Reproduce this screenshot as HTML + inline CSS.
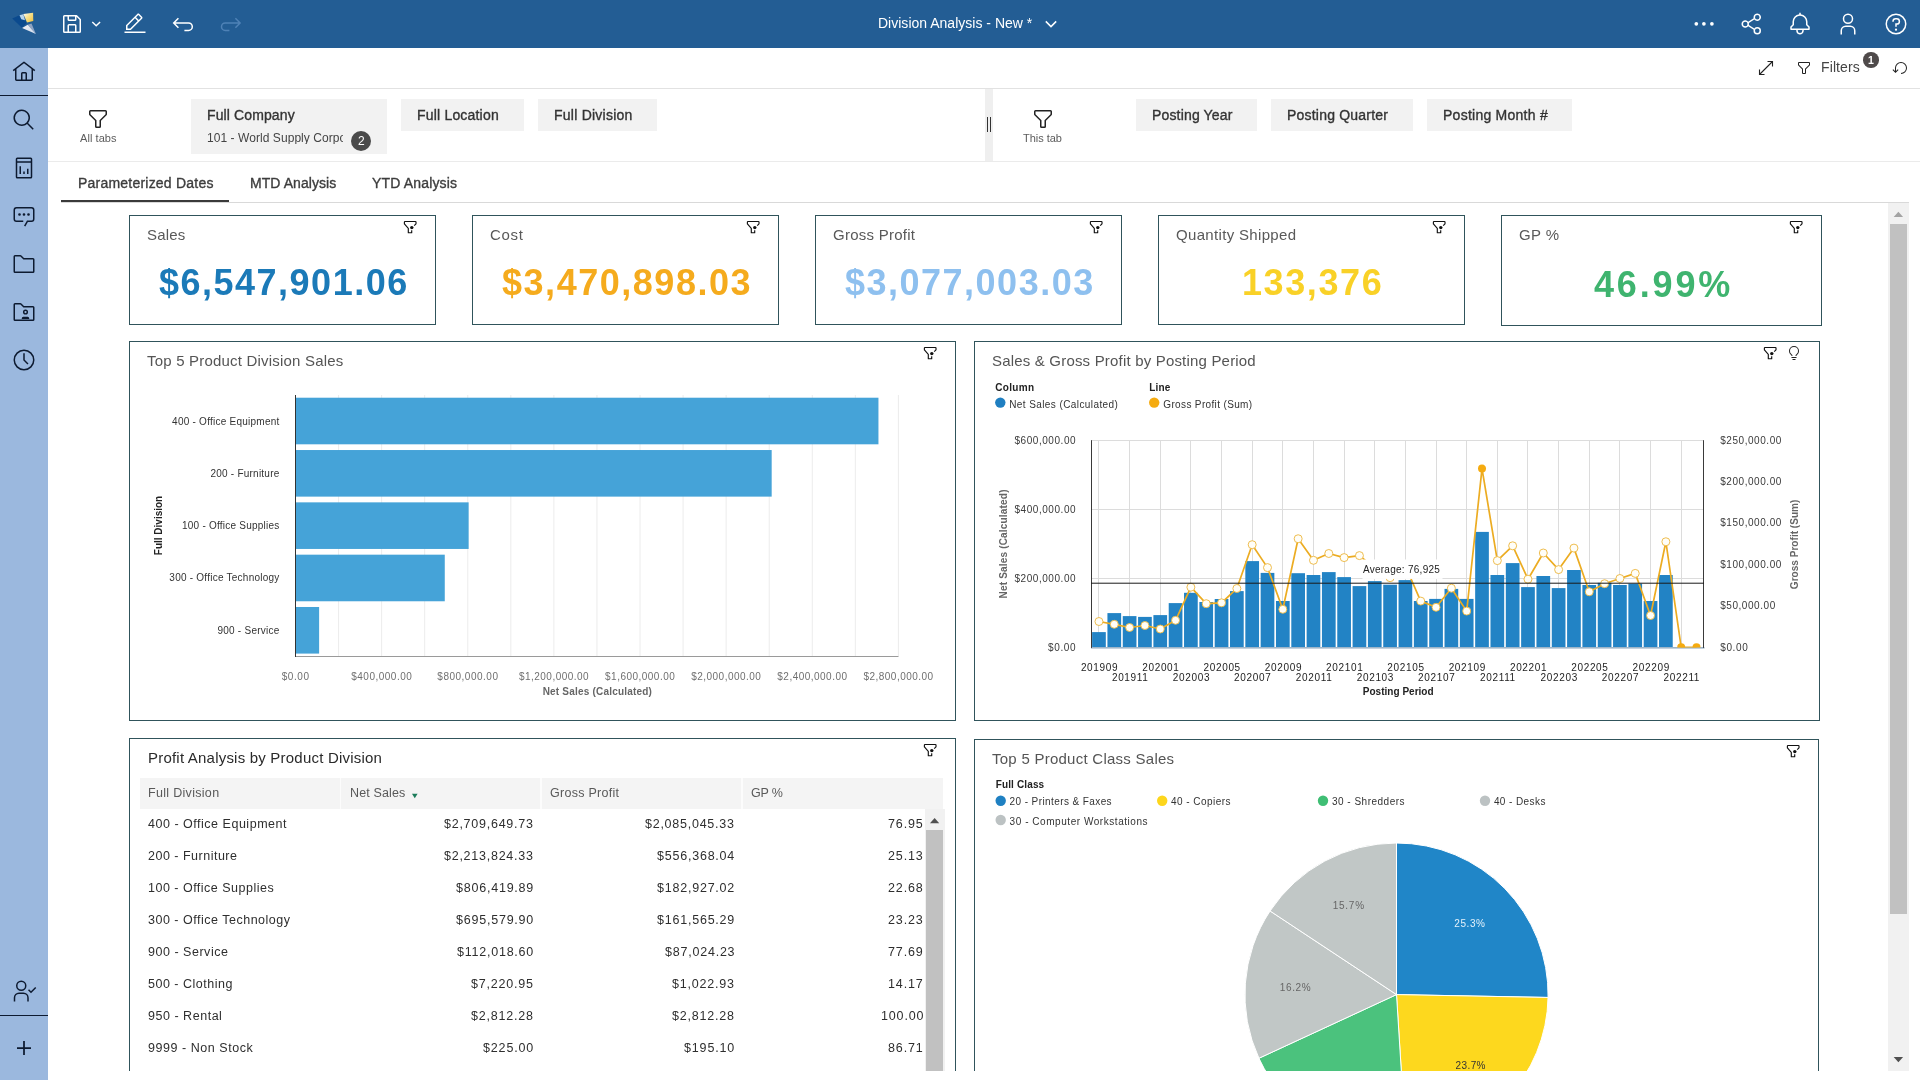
<!DOCTYPE html>
<html lang="en"><head><meta charset="utf-8"><title>Division Analysis - New</title>
<style>
*{box-sizing:border-box}
html,body{margin:0;padding:0;background:#fff}
body{width:1920px;height:1080px;overflow:hidden;position:relative;font-family:"Liberation Sans",sans-serif}
.t{position:absolute;white-space:pre;line-height:1;display:block;will-change:transform}
.ic{position:absolute;display:block;overflow:visible;will-change:transform}
.b{position:absolute;display:block}
.card{position:absolute;border:1px solid #30545b;background:#fff}
svg text{font-family:"Liberation Sans",sans-serif}
</style></head><body>
<!-- top bar -->
<div class="b" style="left:0px;top:0px;width:1920px;height:48px;background:#235d94;"></div><svg class="ic" style="left:8px;top:8px" width="32" height="30" viewBox="8 8 32 30"><defs><linearGradient id="lg1" x1="0" y1="0" x2="1" y2="1"><stop offset="0" stop-color="#ffffff"/><stop offset="0.450" stop-color="#f7e08a"/><stop offset="1" stop-color="#f0bd3a"/></linearGradient><linearGradient id="lg2" x1="0" y1="0" x2="1" y2="1"><stop offset="0" stop-color="#f4f0f4"/><stop offset="1" stop-color="#cfdcec"/></linearGradient></defs><polygon points="12.200,18.400 19.500,15.200 23.500,16 26.500,23.200 22,27.800" fill="#0b4a8e"/><polygon points="19.500,15.200 23.300,14.200 25,20.300 21.300,19.300" fill="#b7d5ef"/><polygon points="23.300,14 33.100,12.700 33.300,21 27,22.600" fill="url(#lg1)"/><polygon points="27.700,24.700 31.500,23.500 35.900,34" fill="#8fa3c2"/><polygon points="22.100,28.100 27.700,24.700 35.900,34" fill="url(#lg2)"/></svg><svg class="ic" style="left:60.00px;top:12.00px" width="24" height="24" viewBox="0 0 32 32" ><path fill="#fff" d="M27.71,9.29l-5-5A1,1,0,0,0,22,4H6A2,2,0,0,0,4,6V26a2,2,0,0,0,2,2H26a2,2,0,0,0,2-2V10A1,1,0,0,0,27.71,9.29ZM12,6h8v4H12Zm8,20H12V18h8Zm2,0V18a2,2,0,0,0-2-2H12a2,2,0,0,0-2,2v8H6V6h4v4a2,2,0,0,0,2,2h8a2,2,0,0,0,2-2V6.41l4,4V26Z"/></svg><svg class="ic" style="left:88px;top:16px" width="16" height="16" viewBox="88 16 16 16" fill="none" stroke="#fff" stroke-width="1.400"><path d="M92.300,21.900L96.200,25.800L100.100,21.900"/></svg><svg class="ic" style="left:123.00px;top:12.00px" width="24" height="24" viewBox="0 0 32 32" ><path fill="#fff" d="M2 26H30V28H2zM25.4 9c.8-.8.8-2 0-2.8l-3.6-3.6c-.8-.8-2-.8-2.8 0l-15 15V24h6.400L25.400 9zM20.400 4L24 7.600l-3 3L17.400 7 20.400 4zM6 22v-3.600l10-10 3.600 3.600-10 10H6z"/></svg><svg class="ic" style="left:0;top:0" width="260" height="48" viewBox="0 0 260 48" fill="none" stroke-width="1.500"><path stroke="#fff" d="M178.400,18.300L173.700,23L178.400,27.700M173.900,23H188.600a3.700,3.700,0,0,1,0,7.400H184.400"/><path stroke="#4f82b6" d="M235.400,18.300L240.100,23L235.400,27.700M239.900,23H225.200a3.700,3.700,0,0,0,0,7.400H229.400"/></svg><span class="t" style="left:877.50px;top:16px;font-size:14px;color:#fff;letter-spacing:0.01px;">Division Analysis - New *</span><svg class="ic" style="left:1040px;top:14px" width="22" height="20" viewBox="1040 14 22 20" fill="none" stroke="#fff" stroke-width="1.500"><path d="M1045.800,21.400L1051,26.600L1056.200,21.400"/></svg><svg class="ic" style="left:1692px;top:12px" width="24" height="24" viewBox="0 0 24 24"><circle cx="4.300" cy="11.800" r="1.850" fill="#fff"/><circle cx="11.900" cy="11.800" r="1.850" fill="#fff"/><circle cx="19.900" cy="11.800" r="1.850" fill="#fff"/></svg><svg class="ic" style="left:1740.00px;top:12.00px" width="24" height="24" viewBox="0 0 32 32" ><path fill="#fff" d="M23,20a5,5,0,0,0-3.89,1.89L11.8,17.32a4.46,4.46,0,0,0,0-2.64l7.31-4.57A5,5,0,1,0,18,7a4.79,4.79,0,0,0,.2,1.32l-7.31,4.57a5,5,0,1,0,0,6.22l7.31,4.57A4.79,4.79,0,0,0,18,25a5,5,0,1,0,5-5ZM23,4a3,3,0,1,1-3,3A3,3,0,0,1,23,4ZM7,19a3,3,0,1,1,3-3A3,3,0,0,1,7,19Zm16,9a3,3,0,1,1,3-3A3,3,0,0,1,23,28Z"/></svg><svg class="ic" style="left:1788.00px;top:11.50px" width="24" height="24" viewBox="0 0 32 32" ><path fill="#fff" d="M28.7071,19.293,26,16.5859V13a10.0136,10.0136,0,0,0-9-9.9492V1H15V3.0508A10.0136,10.0136,0,0,0,6,13v3.5859L3.2929,19.293A1,1,0,0,0,3,20v3a1,1,0,0,0,1,1h7v.7768a5.152,5.152,0,0,0,4.5,5.1987A5.0057,5.0057,0,0,0,21,25V24h7a1,1,0,0,0,1-1V20A1,1,0,0,0,28.7071,19.293ZM19,25a3,3,0,0,1-6,0V24h6Zm8-3H5V20.4141L7.707,17.707A1,1,0,0,0,8,17V13a8,8,0,0,1,16,0v4a1,1,0,0,0,.293.707L27,20.4141Z"/></svg><svg class="ic" style="left:1836.00px;top:11.70px" width="24" height="24" viewBox="0 0 32 32" ><path fill="#fff" d="M16 4a5 5 0 11-5 5 5 5 0 015-5m0-2a7 7 0 107 7A7 7 0 0016 2zM26 30H24V25a5 5 0 00-5-5H13a5 5 0 00-5 5v5H6V25a7 7 0 017-7h6a7 7 0 017 7z"/></svg><svg class="ic" style="left:1884.00px;top:12.00px" width="24" height="24" viewBox="0 0 32 32" ><path fill="#fff" d="M16,2A14,14,0,1,0,30,16,14,14,0,0,0,16,2Zm0,26A12,12,0,1,1,28,16,12,12,0,0,1,16,28ZM17,8H15.5A4.49,4.49,0,0,0,11,12.5V13h2v-.5A2.5,2.5,0,0,1,15.5,10H17a2.5,2.5,0,0,1,0,5H15v4.5h2V17a4.5,4.5,0,0,0,0-9ZM14.5,23.5a1.5,1.5,0,1,0,3,0a1.5,1.5,0,1,0,-3,0Z"/></svg>
<!-- sidebar -->
<div class="b" style="left:0px;top:48px;width:48px;height:1032px;background:#9bb8de;"></div><svg class="ic" style="left:12.00px;top:59.50px" width="24" height="24" viewBox="0 0 32 32" ><path fill="#0d1a30" d="M16.6123,2.2138a1.01,1.01,0,0,0-1.2427,0L1,13.4194l1.2427,1.5717L4,13.6209V26a2.0041,2.0041,0,0,0,2,2H26a2.0037,2.0037,0,0,0,2-2V13.63L29.7573,15,31,13.4282ZM18,26H14V18h4Zm2,0V18a2.0023,2.0023,0,0,0-2-2H14a2.002,2.002,0,0,0-2,2v8H6V12.0615l10-7.79,10,7.8005V26Z"/></svg><div class="b" style="left:0px;top:95px;width:48px;height:1px;background:#0d1a30;"></div><svg class="ic" style="left:12.00px;top:108.00px" width="24" height="24" viewBox="0 0 32 32" ><path fill="#0d1a30" d="M29,27.5859l-7.5521-7.5521a11.0177,11.0177,0,1,0-1.4141,1.4141L27.5859,29ZM4,13a9,9,0,1,1,9,9A9.01,9.01,0,0,1,4,13Z"/></svg><svg class="ic" style="left:12px;top:156px" width="24" height="24" viewBox="0 0 32 32"><path fill="#0d1a30" d="M25,2H7A2,2,0,0,0,5,4V28a2,2,0,0,0,2,2H25a2,2,0,0,0,2-2V4A2,2,0,0,0,25,2ZM25,4V7H7V4ZM7,28V9H25V28ZM10,13.500h2V24H10ZM15,20.500h2V24H15ZM20,17h2v7H20Z"/></svg><svg class="ic" style="left:12px;top:204px" width="24" height="24" viewBox="0 0 32 32"><path fill="#0d1a30" d="M17.74,30,16,29l4-7h6a2,2,0,0,0,2-2V8a2,2,0,0,0-2-2H6A2,2,0,0,0,4,8V20a2,2,0,0,0,2,2h9v2H6a4,4,0,0,1-4-4V8A4,4,0,0,1,6,4H26a4,4,0,0,1,4,4V20a4,4,0,0,1-4,4H21.160ZM8.200,14a1.800,1.800,0,1,0,3.600,0a1.800,1.800,0,1,0,-3.600,0ZM14.200,14a1.800,1.800,0,1,0,3.600,0a1.800,1.800,0,1,0,-3.600,0ZM20.200,14a1.800,1.800,0,1,0,3.600,0a1.800,1.800,0,1,0,-3.600,0Z"/></svg><svg class="ic" style="left:12.00px;top:252.00px" width="24" height="24" viewBox="0 0 32 32" ><path fill="#0d1a30" d="M11.1716,6l3.4142,3.4142L15.1716,10H28V26H4V6h7.1716m0-2H4A2,2,0,0,0,2,6V26a2,2,0,0,0,2,2H28a2,2,0,0,0,2-2V10a2,2,0,0,0-2-2H16L12.5858,4.5858A2,2,0,0,0,11.1716,4Z"/></svg><svg class="ic" style="left:12px;top:300px" width="24" height="24" viewBox="0 0 32 32"><path fill="#0d1a30" d="M11.1716,6l3.4142,3.4142L15.1716,10H28V26H4V6h7.1716m0-2H4A2,2,0,0,0,2,6V26a2,2,0,0,0,2,2H28a2,2,0,0,0,2-2V10a2,2,0,0,0-2-2H16L12.5858,4.5858A2,2,0,0,0,11.1716,4ZM18,12.600a3.400,3.400,0,1,0,3.400,3.400A3.400,3.400,0,0,0,18,12.600Zm0,4.900a1.500,1.500,0,1,1,1.500-1.500A1.500,1.500,0,0,1,18,17.500ZM13,26.500V24.500a2.200,2.200,0,0,1,2.200-2.200h5.600a2.200,2.200,0,0,1,2.200,2.200V26.500Z"/></svg><svg class="ic" style="left:12.00px;top:348.00px" width="24" height="24" viewBox="0 0 32 32" ><path fill="#0d1a30" d="M16,30A14,14,0,1,1,30,16,14,14,0,0,1,16,30ZM16,4A12,12,0,1,0,28,16,12,12,0,0,0,16,4ZM20.59 22L15 16.41 15 7 17 7 17 15.58 22 20.59 20.59 22z"/></svg><svg class="ic" style="left:12px;top:979px" width="26" height="24" viewBox="0 0 34 32"><path fill="#0d1a30" d="M12,4A5,5,0,1,1,7,9a5,5,0,0,1,5-5m0-2a7,7,0,1,0,7,7A7,7,0,0,0,12,2ZM22,30H20V25a5,5,0,0,0-5-5H9a5,5,0,0,0-5,5v5H2V25a7,7,0,0,1,7-7h6a7,7,0,0,1,7,7ZM25,16.180l-2.590-2.590L21,15l4,4,7-7-1.410-1.410Z"/></svg><div class="b" style="left:0px;top:1015px;width:48px;height:1px;background:#0d1a30;"></div><svg class="ic" style="left:10.00px;top:1034.00px" width="28" height="28" viewBox="0 0 32 32" ><path fill="#0d1a30" d="M17 15L17 8 15 8 15 15 8 15 8 17 15 17 15 24 17 24 17 17 24 17 24 15z"/></svg>
<!-- toolbar -->
<div class="b" style="left:48px;top:88px;width:1872px;height:1px;background:#e2e2e2;"></div><svg class="ic" style="left:1758px;top:60px" width="16" height="16" viewBox="0 0 16 16" fill="none" stroke="#222" stroke-width="1.1"><path d="M1.500,14.500L14.500,1.500M9.500,1.500h5v5M1.500,9.500v5h5"/></svg><svg class="ic" style="left:1796.00px;top:60.00px" width="16" height="16" viewBox="0 0 32 32" ><path fill="#222" d="M18,28H14a2,2,0,0,1-2-2V18.41L4.59,11A2,2,0,0,1,4,9.59V6A2,2,0,0,1,6,4H26a2,2,0,0,1,2,2V9.59A2,2,0,0,1,27.41,11L20,18.41V26A2,2,0,0,1,18,28ZM6,6V9.59l8,8V26h4V17.59l8-8V6Z"/></svg><span class="t" style="left:1820.60px;top:60px;font-size:14px;color:#444;letter-spacing:0.112px;">Filters</span><div class="b" style="left:1863px;top:52px;width:15.500px;height:15.500px;border-radius:50%;background:#4f4a4a"></div><span class="t" style="left:1867.78px;top:55px;font-size:10.5px;color:#fff;font-weight:700;">1</span><svg class="ic" style="left:1892.00px;top:60.00px" width="16" height="16" viewBox="0 0 32 32" ><path fill="#222" d="M18,28A12,12,0,1,0,6,16v6.2L2.4,18.6,1,20l6,6,6-6-1.4-1.4L8,22.2V16H8A10,10,0,1,1,18,26Z"/></svg>
<!-- filter bar -->
<div class="b" style="left:48px;top:161px;width:1872px;height:1px;background:#ebebeb;"></div><div class="b" style="left:985px;top:89px;width:8px;height:72px;background:#efefef;"></div><div class="b" style="left:987px;top:117px;width:1.3px;height:15px;background:#333;"></div><div class="b" style="left:989.6px;top:117px;width:1.3px;height:15px;background:#333;"></div><svg class="ic" style="left:86.00px;top:107.00px" width="24" height="24" viewBox="0 0 32 32" ><path fill="#222" d="M18,28H14a2,2,0,0,1-2-2V18.41L4.59,11A2,2,0,0,1,4,9.59V6A2,2,0,0,1,6,4H26a2,2,0,0,1,2,2V9.59A2,2,0,0,1,27.41,11L20,18.41V26A2,2,0,0,1,18,28ZM6,6V9.59l8,8V26h4V17.59l8-8V6Z"/></svg><span class="t" style="left:79.90px;top:133px;font-size:11px;color:#5c5c5c;letter-spacing:0.06px;">All tabs</span><div class="b" style="left:191px;top:98.5px;width:196px;height:55.5px;background:#f2f2f2;"></div><span class="t" style="left:207.40px;top:108px;font-size:14px;color:#333;letter-spacing:0.12px;-webkit-text-stroke:0.35px #333;">Full Company</span><span class="t" style="left:207.40px;top:132px;font-size:12px;color:#444;width:135.700px;overflow:hidden;letter-spacing:0.060px;">101 - World Supply Corporation</span><div class="b" style="left:351px;top:131px;width:20px;height:20px;border-radius:50%;background:#4a4a4a"></div><span class="t" style="left:357.66px;top:135px;font-size:12px;color:#fff;">2</span><div class="b" style="left:401px;top:98.5px;width:123px;height:32px;background:#f2f2f2;"></div><span class="t" style="left:417.30px;top:108px;font-size:14px;color:#333;letter-spacing:0.192px;-webkit-text-stroke:0.35px #333;">Full Location</span><div class="b" style="left:538px;top:98.5px;width:119px;height:32px;background:#f2f2f2;"></div><span class="t" style="left:554.00px;top:108px;font-size:14px;color:#333;letter-spacing:0.236px;-webkit-text-stroke:0.35px #333;">Full Division</span><svg class="ic" style="left:1031.00px;top:107.00px" width="24" height="24" viewBox="0 0 32 32" ><path fill="#222" d="M18,28H14a2,2,0,0,1-2-2V18.41L4.59,11A2,2,0,0,1,4,9.59V6A2,2,0,0,1,6,4H26a2,2,0,0,1,2,2V9.59A2,2,0,0,1,27.41,11L20,18.41V26A2,2,0,0,1,18,28ZM6,6V9.59l8,8V26h4V17.59l8-8V6Z"/></svg><span class="t" style="left:1023.30px;top:133px;font-size:11px;color:#5c5c5c;letter-spacing:-0.02px;">This tab</span><div class="b" style="left:1136px;top:98.5px;width:121px;height:32px;background:#f2f2f2;"></div><span class="t" style="left:1152.30px;top:108px;font-size:14px;color:#333;letter-spacing:0.161px;-webkit-text-stroke:0.35px #333;">Posting Year</span><div class="b" style="left:1271px;top:98.5px;width:142px;height:32px;background:#f2f2f2;"></div><span class="t" style="left:1287.30px;top:108px;font-size:14px;color:#333;letter-spacing:0.21px;-webkit-text-stroke:0.35px #333;">Posting Quarter</span><div class="b" style="left:1427px;top:98.5px;width:145px;height:32px;background:#f2f2f2;"></div><span class="t" style="left:1443.00px;top:108px;font-size:14px;color:#333;letter-spacing:0.252px;-webkit-text-stroke:0.35px #333;">Posting Month #</span>
<!-- tabs -->
<div class="b" style="left:61px;top:202px;width:1847.6px;height:1px;background:#d9d9d9;"></div><div class="b" style="left:61px;top:200px;width:168px;height:2px;background:#3a3a3a;"></div><span class="t" style="left:77.60px;top:176px;font-size:14px;color:#3d3d3d;letter-spacing:0.216px;-webkit-text-stroke:0.35px #3d3d3d;">Parameterized Dates</span><span class="t" style="left:249.70px;top:176px;font-size:14px;color:#3d3d3d;letter-spacing:0.066px;-webkit-text-stroke:0.35px #3d3d3d;">MTD Analysis</span><span class="t" style="left:372.30px;top:176px;font-size:14px;color:#3d3d3d;letter-spacing:0.159px;-webkit-text-stroke:0.35px #3d3d3d;">YTD Analysis</span>
<!-- scrollbar -->
<div class="b" style="left:1888px;top:203px;width:20.6px;height:868px;background:#f1f1f1;"></div><div class="b" style="left:1890px;top:224px;width:17px;height:690px;background:#c1c1c1;"></div><svg class="ic" style="left:1889px;top:208px" width="19" height="14" viewBox="0 0 19 14"><path d="M4.700,9L9.400,3.800L14.100,9z" fill="#a3a3a3"/></svg><svg class="ic" style="left:1889px;top:1053px" width="19" height="14" viewBox="0 0 19 14"><path d="M4.700,4L9.400,9.200L14.100,4z" fill="#505050"/></svg>
<!-- KPI cards -->
<div class="card" style="left:129px;top:215px;width:307px;height:110px"></div><span class="t" style="left:147.40px;top:227px;font-size:15px;color:#595959;letter-spacing:0.167px;">Sales</span><span class="t" style="left:158.90px;top:265px;font-size:36px;color:#1b7ab8;font-weight:700;letter-spacing:1.497px;">$6,547,901.06</span><svg class="ic" style="left:402px;top:219px" width="16" height="16" viewBox="0 0 16 16"><path d="M9.700,11.300V13.700H6.300V9.300L2.400,4.900V3.100Q2.400,2.500,3,2.500H13.400Q14,2.500,14,3.100V4.800L12.200,6.600" fill="none" stroke="#111" stroke-width="1.150" stroke-linejoin="round"/><circle cx="9.800" cy="8.600" r="1.700" fill="#111"/></svg><div class="card" style="left:472px;top:215px;width:307px;height:110px"></div><span class="t" style="left:490.40px;top:227px;font-size:15px;color:#595959;letter-spacing:0.719px;">Cost</span><span class="t" style="left:501.70px;top:265px;font-size:36px;color:#f5ab1d;font-weight:700;letter-spacing:1.53px;">$3,470,898.03</span><svg class="ic" style="left:745px;top:219px" width="16" height="16" viewBox="0 0 16 16"><path d="M9.700,11.300V13.700H6.300V9.300L2.400,4.900V3.100Q2.400,2.500,3,2.500H13.400Q14,2.500,14,3.100V4.800L12.200,6.600" fill="none" stroke="#111" stroke-width="1.150" stroke-linejoin="round"/><circle cx="9.800" cy="8.600" r="1.700" fill="#111"/></svg><div class="card" style="left:815px;top:215px;width:307px;height:110px"></div><span class="t" style="left:833.40px;top:227px;font-size:15px;color:#595959;letter-spacing:0.256px;">Gross Profit</span><span class="t" style="left:844.90px;top:265px;font-size:36px;color:#8ec0ef;font-weight:700;letter-spacing:1.497px;">$3,077,003.03</span><svg class="ic" style="left:1088px;top:219px" width="16" height="16" viewBox="0 0 16 16"><path d="M9.700,11.300V13.700H6.300V9.300L2.400,4.900V3.100Q2.400,2.500,3,2.500H13.400Q14,2.500,14,3.100V4.800L12.200,6.600" fill="none" stroke="#111" stroke-width="1.150" stroke-linejoin="round"/><circle cx="9.800" cy="8.600" r="1.700" fill="#111"/></svg><div class="card" style="left:1158px;top:215px;width:307px;height:110px"></div><span class="t" style="left:1176.40px;top:227px;font-size:15px;color:#595959;letter-spacing:0.328px;">Quantity Shipped</span><span class="t" style="left:1242.15px;top:265px;font-size:36px;color:#f9d127;font-weight:700;letter-spacing:1.593px;">133,376</span><svg class="ic" style="left:1431px;top:219px" width="16" height="16" viewBox="0 0 16 16"><path d="M9.700,11.300V13.700H6.300V9.300L2.400,4.900V3.100Q2.400,2.500,3,2.500H13.400Q14,2.500,14,3.100V4.800L12.200,6.600" fill="none" stroke="#111" stroke-width="1.150" stroke-linejoin="round"/><circle cx="9.800" cy="8.600" r="1.700" fill="#111"/></svg><div class="card" style="left:1501px;top:215px;width:321px;height:111px"></div><span class="t" style="left:1519.40px;top:227px;font-size:15px;color:#595959;letter-spacing:0.365px;">GP %</span><span class="t" style="left:1593.85px;top:267px;font-size:36px;color:#3fb46f;font-weight:700;letter-spacing:2.838px;">46.99%</span><svg class="ic" style="left:1788px;top:219px" width="16" height="16" viewBox="0 0 16 16"><path d="M9.700,11.300V13.700H6.300V9.300L2.400,4.900V3.100Q2.400,2.500,3,2.500H13.400Q14,2.500,14,3.100V4.800L12.200,6.600" fill="none" stroke="#111" stroke-width="1.150" stroke-linejoin="round"/><circle cx="9.800" cy="8.600" r="1.700" fill="#111"/></svg>
<!-- panels -->
<div class="card" style="left:129px;top:341px;width:827px;height:380px"></div><div class="card" style="left:974px;top:341px;width:846px;height:380px"></div><div class="card" style="left:129px;top:738px;width:827px;height:362px"></div><div class="card" style="left:974px;top:739px;width:845px;height:361px"></div>
<!-- bar chart -->
<span class="t" style="left:147.40px;top:353px;font-size:15px;color:#555;letter-spacing:0.199px;">Top 5 Product Division Sales</span><svg class="ic" style="left:922px;top:344.8px" width="16" height="16" viewBox="0 0 16 16"><path d="M9.700,11.300V13.700H6.300V9.300L2.400,4.900V3.100Q2.400,2.500,3,2.500H13.400Q14,2.500,14,3.100V4.800L12.200,6.600" fill="none" stroke="#111" stroke-width="1.150" stroke-linejoin="round"/><circle cx="9.800" cy="8.600" r="1.700" fill="#111"/></svg><svg class="ic" style="left:130px;top:380px" width="825" height="330" viewBox="130 380 825 330">
<rect x="338.06" y="395" width="1" height="261" fill="#ececec"/>
<rect x="381.13" y="395" width="1" height="261" fill="#ececec"/>
<rect x="424.19" y="395" width="1" height="261" fill="#ececec"/>
<rect x="467.26" y="395" width="1" height="261" fill="#ececec"/>
<rect x="510.32" y="395" width="1" height="261" fill="#ececec"/>
<rect x="553.39" y="395" width="1" height="261" fill="#ececec"/>
<rect x="596.45" y="395" width="1" height="261" fill="#ececec"/>
<rect x="639.51" y="395" width="1" height="261" fill="#ececec"/>
<rect x="682.58" y="395" width="1" height="261" fill="#ececec"/>
<rect x="725.64" y="395" width="1" height="261" fill="#ececec"/>
<rect x="768.71" y="395" width="1" height="261" fill="#ececec"/>
<rect x="811.77" y="395" width="1" height="261" fill="#ececec"/>
<rect x="854.84" y="395" width="1" height="261" fill="#ececec"/>
<rect x="897.90" y="395" width="1" height="261" fill="#ececec"/>
<rect x="295.500" y="397.71" width="582.95" height="46.600" fill="#45a3d8"/>
<text x="172.09" y="424.51" font-size="10" fill="#333" letter-spacing="0.243" >400 - Office Equipment</text>
<rect x="295.500" y="450.03" width="476.18" height="46.600" fill="#45a3d8"/>
<text x="210.43" y="476.83" font-size="10" fill="#333" letter-spacing="0.234" >200 - Furniture</text>
<rect x="295.500" y="502.35" width="173.14" height="46.600" fill="#45a3d8"/>
<text x="182.00" y="529.15" font-size="10" fill="#333" letter-spacing="0.232" >100 - Office Supplies</text>
<rect x="295.500" y="554.67" width="149.27" height="46.600" fill="#45a3d8"/>
<text x="169.36" y="581.47" font-size="10" fill="#333" letter-spacing="0.238" >300 - Office Technology</text>
<rect x="295.500" y="606.99" width="23.62" height="46.600" fill="#45a3d8"/>
<text x="217.43" y="633.79" font-size="10" fill="#333" letter-spacing="0.246" >900 - Service</text>
<rect x="295" y="656" width="603.500" height="1" fill="#9a9a9a"/>
<rect x="295" y="395" width="1" height="262" fill="#333"/>
<text x="281.76" y="679.70" font-size="10" fill="#6f6f6f" letter-spacing="0.563" >$0.00</text>
<text x="351.21" y="679.70" font-size="10" fill="#6f6f6f" letter-spacing="0.501" >$400,000.00</text>
<text x="437.34" y="679.70" font-size="10" fill="#6f6f6f" letter-spacing="0.501" >$800,000.00</text>
<text x="518.93" y="679.70" font-size="10" fill="#6f6f6f" letter-spacing="0.48" >$1,200,000.00</text>
<text x="605.06" y="679.70" font-size="10" fill="#6f6f6f" letter-spacing="0.48" >$1,600,000.00</text>
<text x="691.19" y="679.70" font-size="10" fill="#6f6f6f" letter-spacing="0.48" >$2,000,000.00</text>
<text x="777.31" y="679.70" font-size="10" fill="#6f6f6f" letter-spacing="0.48" >$2,400,000.00</text>
<text x="863.44" y="679.70" font-size="10" fill="#6f6f6f" letter-spacing="0.48" >$2,800,000.00</text>
<text x="542.68" y="694.60" font-size="10" fill="#666" font-weight="700" letter-spacing="0.2" >Net Sales (Calculated)</text>
<g transform="translate(162,525.500) rotate(-90)"><text x="-29.73" y="0.00" font-size="10" fill="#222" font-weight="700" >Full Division</text></g>
</svg>
<!-- combo chart -->
<span class="t" style="left:992.20px;top:353px;font-size:15px;color:#555;letter-spacing:0.187px;">Sales &amp; Gross Profit by Posting Period</span><svg class="ic" style="left:1762px;top:344.8px" width="16" height="16" viewBox="0 0 16 16"><path d="M9.700,11.300V13.700H6.300V9.300L2.400,4.900V3.100Q2.400,2.500,3,2.500H13.400Q14,2.500,14,3.100V4.800L12.200,6.600" fill="none" stroke="#111" stroke-width="1.150" stroke-linejoin="round"/><circle cx="9.800" cy="8.600" r="1.700" fill="#111"/></svg><svg class="ic" style="left:1786.20px;top:345.00px" width="16" height="16" viewBox="0 0 32 32" ><path fill="#222" d="M11 24H21V26H11zM13 28H19V30H13zM16 2A10 10 0 006 12a9.19 9.19 0 003.46 7.62c1 .93 1.54 1.46 1.54 2.38h2c0-1.84-1.11-2.87-2.19-3.86A7.2 7.2 0 018 12a8 8 0 0116 0 7.2 7.2 0 01-2.82 6.14c-1.07 1-2.18 2-2.18 3.860h2c0-.92.53-1.45 1.540-2.390A9.180 9.180 0 0026 12 10 10 0 0016 2z"/></svg><svg class="ic" style="left:975px;top:375px" width="844" height="340" viewBox="975 375 844 340">
<defs><clipPath id="cpl"><rect x="1085" y="430" width="625" height="217.500"/></clipPath></defs>
<text x="995.30" y="390.80" font-size="10" fill="#222" font-weight="700" letter-spacing="0.316" >Column</text>
<text x="1149.20" y="390.80" font-size="10" fill="#222" font-weight="700" letter-spacing="0.212" >Line</text>
<circle cx="1000.300" cy="402.600" r="5.200" fill="#1f7fc1"/>
<text x="1009.20" y="407.50" font-size="10" fill="#333" letter-spacing="0.412" >Net Sales (Calculated)</text>
<circle cx="1154.200" cy="402.600" r="5.200" fill="#f5ab10"/>
<text x="1163.30" y="407.50" font-size="10" fill="#333" letter-spacing="0.353" >Gross Profit (Sum)</text>
<rect x="1091" y="578" width="613" height="1" fill="#dcdcdc"/>
<rect x="1091" y="509" width="613" height="1" fill="#dcdcdc"/>
<rect x="1091" y="440" width="613" height="1" fill="#dcdcdc"/>
<rect x="1098" y="440.20" width="1" height="207.20" fill="#dcdcdc"/>
<rect x="1129" y="440.20" width="1" height="207.20" fill="#dcdcdc"/>
<rect x="1160" y="440.20" width="1" height="207.20" fill="#dcdcdc"/>
<rect x="1190" y="440.20" width="1" height="207.20" fill="#dcdcdc"/>
<rect x="1221" y="440.20" width="1" height="207.20" fill="#dcdcdc"/>
<rect x="1252" y="440.20" width="1" height="207.20" fill="#dcdcdc"/>
<rect x="1282" y="440.20" width="1" height="207.20" fill="#dcdcdc"/>
<rect x="1313" y="440.20" width="1" height="207.20" fill="#dcdcdc"/>
<rect x="1344" y="440.20" width="1" height="207.20" fill="#dcdcdc"/>
<rect x="1374" y="440.20" width="1" height="207.20" fill="#dcdcdc"/>
<rect x="1405" y="440.20" width="1" height="207.20" fill="#dcdcdc"/>
<rect x="1436" y="440.20" width="1" height="207.20" fill="#dcdcdc"/>
<rect x="1466" y="440.20" width="1" height="207.20" fill="#dcdcdc"/>
<rect x="1497" y="440.20" width="1" height="207.20" fill="#dcdcdc"/>
<rect x="1527" y="440.20" width="1" height="207.20" fill="#dcdcdc"/>
<rect x="1558" y="440.20" width="1" height="207.20" fill="#dcdcdc"/>
<rect x="1589" y="440.20" width="1" height="207.20" fill="#dcdcdc"/>
<rect x="1619" y="440.20" width="1" height="207.20" fill="#dcdcdc"/>
<rect x="1650" y="440.20" width="1" height="207.20" fill="#dcdcdc"/>
<rect x="1681" y="440.20" width="1" height="207.20" fill="#dcdcdc"/>
<rect x="1092.11" y="632.10" width="13.700" height="15.30" fill="#2283c5"/>
<rect x="1107.43" y="613.10" width="13.700" height="34.30" fill="#2283c5"/>
<rect x="1122.76" y="616.10" width="13.700" height="31.30" fill="#2283c5"/>
<rect x="1138.08" y="616.90" width="13.700" height="30.50" fill="#2283c5"/>
<rect x="1153.40" y="615.10" width="13.700" height="32.30" fill="#2283c5"/>
<rect x="1168.72" y="603.10" width="13.700" height="44.30" fill="#2283c5"/>
<rect x="1184.04" y="592.80" width="13.700" height="54.60" fill="#2283c5"/>
<rect x="1199.37" y="602.00" width="13.700" height="45.40" fill="#2283c5"/>
<rect x="1214.69" y="599.00" width="13.700" height="48.40" fill="#2283c5"/>
<rect x="1230.01" y="591.10" width="13.700" height="56.30" fill="#2283c5"/>
<rect x="1245.33" y="561.10" width="13.700" height="86.30" fill="#2283c5"/>
<rect x="1260.65" y="572.90" width="13.700" height="74.50" fill="#2283c5"/>
<rect x="1275.97" y="601.00" width="13.700" height="46.40" fill="#2283c5"/>
<rect x="1291.30" y="573.20" width="13.700" height="74.20" fill="#2283c5"/>
<rect x="1306.62" y="575.00" width="13.700" height="72.40" fill="#2283c5"/>
<rect x="1321.94" y="572.10" width="13.700" height="75.30" fill="#2283c5"/>
<rect x="1337.26" y="577.10" width="13.700" height="70.30" fill="#2283c5"/>
<rect x="1352.59" y="586.10" width="13.700" height="61.30" fill="#2283c5"/>
<rect x="1367.91" y="581.10" width="13.700" height="66.30" fill="#2283c5"/>
<rect x="1383.23" y="584.70" width="13.700" height="62.70" fill="#2283c5"/>
<rect x="1398.55" y="580.10" width="13.700" height="67.30" fill="#2283c5"/>
<rect x="1413.87" y="601.00" width="13.700" height="46.40" fill="#2283c5"/>
<rect x="1429.20" y="598.90" width="13.700" height="48.50" fill="#2283c5"/>
<rect x="1444.52" y="588.90" width="13.700" height="58.50" fill="#2283c5"/>
<rect x="1459.84" y="598.90" width="13.700" height="48.50" fill="#2283c5"/>
<rect x="1475.16" y="531.90" width="13.700" height="115.50" fill="#2283c5"/>
<rect x="1490.48" y="575.00" width="13.700" height="72.40" fill="#2283c5"/>
<rect x="1505.81" y="563.10" width="13.700" height="84.30" fill="#2283c5"/>
<rect x="1521.13" y="587.10" width="13.700" height="60.30" fill="#2283c5"/>
<rect x="1536.45" y="576.00" width="13.700" height="71.40" fill="#2283c5"/>
<rect x="1551.77" y="588.10" width="13.700" height="59.30" fill="#2283c5"/>
<rect x="1567.09" y="570.00" width="13.700" height="77.40" fill="#2283c5"/>
<rect x="1582.41" y="585.00" width="13.700" height="62.40" fill="#2283c5"/>
<rect x="1597.74" y="582.80" width="13.700" height="64.60" fill="#2283c5"/>
<rect x="1613.06" y="585.00" width="13.700" height="62.40" fill="#2283c5"/>
<rect x="1628.38" y="583.60" width="13.700" height="63.80" fill="#2283c5"/>
<rect x="1643.70" y="601.00" width="13.700" height="46.40" fill="#2283c5"/>
<rect x="1659.03" y="575.00" width="13.700" height="72.40" fill="#2283c5"/>
<rect x="1091" y="647.00" width="613.500" height="1.600" fill="#9db5c9"/>
<rect x="1091" y="440.20" width="1" height="207.70" fill="#3a3a3a"/>
<rect x="1703" y="440.20" width="1" height="207.70" fill="#3a3a3a"/>
<g clip-path="url(#cpl)"><polyline points="1098.96,621.50 1114.28,624.30 1129.61,627.50 1144.93,625.50 1160.25,629.00 1175.57,620.30 1190.89,587.20 1206.21,603.70 1221.54,602.80 1236.86,588.50 1252.18,544.70 1267.50,567.60 1282.82,609.30 1298.15,538.75 1313.47,560.30 1328.79,553.50 1344.11,557.60 1359.43,555.60 1374.76,568.00 1390.08,577.70 1405.40,566.00 1420.72,601.10 1436.05,607.30 1451.37,588.20 1466.69,611.10 1482.01,468.60 1497.33,560.60 1512.65,545.80 1527.98,579.20 1543.30,553.00 1558.62,569.60 1573.94,548.10 1589.26,591.80 1604.59,583.70 1619.91,578.50 1635.23,573.40 1650.55,615.50 1665.88,541.75 1681.20,647.30 1696.52,647.30" fill="none" stroke="#ecac22" stroke-width="1.700" stroke-linejoin="round"/>
<circle cx="1098.96" cy="621.50" r="4" fill="#fffef8" stroke="#ecb53c" stroke-width="0.900"/>
<circle cx="1114.28" cy="624.30" r="4" fill="#fffef8" stroke="#ecb53c" stroke-width="0.900"/>
<circle cx="1129.61" cy="627.50" r="4" fill="#fffef8" stroke="#ecb53c" stroke-width="0.900"/>
<circle cx="1144.93" cy="625.50" r="4" fill="#fffef8" stroke="#ecb53c" stroke-width="0.900"/>
<circle cx="1160.25" cy="629.00" r="4" fill="#fffef8" stroke="#ecb53c" stroke-width="0.900"/>
<circle cx="1175.57" cy="620.30" r="4" fill="#fffef8" stroke="#ecb53c" stroke-width="0.900"/>
<circle cx="1190.89" cy="587.20" r="4" fill="#fffef8" stroke="#ecb53c" stroke-width="0.900"/>
<circle cx="1206.21" cy="603.70" r="4" fill="#fffef8" stroke="#ecb53c" stroke-width="0.900"/>
<circle cx="1221.54" cy="602.80" r="4" fill="#fffef8" stroke="#ecb53c" stroke-width="0.900"/>
<circle cx="1236.86" cy="588.50" r="4" fill="#fffef8" stroke="#ecb53c" stroke-width="0.900"/>
<circle cx="1252.18" cy="544.70" r="4" fill="#fffef8" stroke="#ecb53c" stroke-width="0.900"/>
<circle cx="1267.50" cy="567.60" r="4" fill="#fffef8" stroke="#ecb53c" stroke-width="0.900"/>
<circle cx="1282.82" cy="609.30" r="4" fill="#fffef8" stroke="#ecb53c" stroke-width="0.900"/>
<circle cx="1298.15" cy="538.75" r="4" fill="#fffef8" stroke="#ecb53c" stroke-width="0.900"/>
<circle cx="1313.47" cy="560.30" r="4" fill="#fffef8" stroke="#ecb53c" stroke-width="0.900"/>
<circle cx="1328.79" cy="553.50" r="4" fill="#fffef8" stroke="#ecb53c" stroke-width="0.900"/>
<circle cx="1344.11" cy="557.60" r="4" fill="#fffef8" stroke="#ecb53c" stroke-width="0.900"/>
<circle cx="1359.43" cy="555.60" r="4" fill="#fffef8" stroke="#ecb53c" stroke-width="0.900"/>
<circle cx="1374.76" cy="568.00" r="4" fill="#fffef8" stroke="#ecb53c" stroke-width="0.900"/>
<circle cx="1390.08" cy="577.70" r="4" fill="#fffef8" stroke="#ecb53c" stroke-width="0.900"/>
<circle cx="1405.40" cy="566.00" r="4" fill="#fffef8" stroke="#ecb53c" stroke-width="0.900"/>
<circle cx="1420.72" cy="601.10" r="4" fill="#fffef8" stroke="#ecb53c" stroke-width="0.900"/>
<circle cx="1436.05" cy="607.30" r="4" fill="#fffef8" stroke="#ecb53c" stroke-width="0.900"/>
<circle cx="1451.37" cy="588.20" r="4" fill="#fffef8" stroke="#ecb53c" stroke-width="0.900"/>
<circle cx="1466.69" cy="611.10" r="4" fill="#fffef8" stroke="#ecb53c" stroke-width="0.900"/>
<circle cx="1482.01" cy="468.60" r="4" fill="#f5ab10"/>
<circle cx="1497.33" cy="560.60" r="4" fill="#fffef8" stroke="#ecb53c" stroke-width="0.900"/>
<circle cx="1512.65" cy="545.80" r="4" fill="#fffef8" stroke="#ecb53c" stroke-width="0.900"/>
<circle cx="1527.98" cy="579.20" r="4" fill="#fffef8" stroke="#ecb53c" stroke-width="0.900"/>
<circle cx="1543.30" cy="553.00" r="4" fill="#fffef8" stroke="#ecb53c" stroke-width="0.900"/>
<circle cx="1558.62" cy="569.60" r="4" fill="#fffef8" stroke="#ecb53c" stroke-width="0.900"/>
<circle cx="1573.94" cy="548.10" r="4" fill="#fffef8" stroke="#ecb53c" stroke-width="0.900"/>
<circle cx="1589.26" cy="591.80" r="4" fill="#fffef8" stroke="#ecb53c" stroke-width="0.900"/>
<circle cx="1604.59" cy="583.70" r="4" fill="#fffef8" stroke="#ecb53c" stroke-width="0.900"/>
<circle cx="1619.91" cy="578.50" r="4" fill="#fffef8" stroke="#ecb53c" stroke-width="0.900"/>
<circle cx="1635.23" cy="573.40" r="4" fill="#fffef8" stroke="#ecb53c" stroke-width="0.900"/>
<circle cx="1650.55" cy="615.50" r="4" fill="#fffef8" stroke="#ecb53c" stroke-width="0.900"/>
<circle cx="1665.88" cy="541.75" r="4" fill="#fffef8" stroke="#ecb53c" stroke-width="0.900"/>
<circle cx="1681.20" cy="647.30" r="4" fill="#f5ab10"/>
<circle cx="1696.52" cy="647.30" r="4" fill="#f5ab10"/>
</g>
<rect x="1091" y="582.700" width="613" height="1" fill="#1a1a1a"/>
<rect x="1362.500" y="559.500" width="80" height="19.400" fill="#fff"/>
<text x="1362.90" y="572.60" font-size="10" fill="#222" letter-spacing="0.27" >Average: 76,925</text>
<text x="1048.06" y="650.80" font-size="10" fill="#3a3a3a" letter-spacing="0.626" >$0.00</text>
<text x="1014.41" y="581.73" font-size="10" fill="#3a3a3a" letter-spacing="0.556" >$200,000.00</text>
<text x="1014.41" y="512.67" font-size="10" fill="#3a3a3a" letter-spacing="0.556" >$400,000.00</text>
<text x="1014.41" y="443.60" font-size="10" fill="#3a3a3a" letter-spacing="0.556" >$600,000.00</text>
<text x="1720.20" y="650.70" font-size="10" fill="#3a3a3a" letter-spacing="0.626" >$0.00</text>
<text x="1720.20" y="609.26" font-size="10" fill="#3a3a3a" letter-spacing="0.556" >$50,000.00</text>
<text x="1720.20" y="567.82" font-size="10" fill="#3a3a3a" letter-spacing="0.556" >$100,000.00</text>
<text x="1720.20" y="526.38" font-size="10" fill="#3a3a3a" letter-spacing="0.556" >$150,000.00</text>
<text x="1720.20" y="484.94" font-size="10" fill="#3a3a3a" letter-spacing="0.556" >$200,000.00</text>
<text x="1720.20" y="443.50" font-size="10" fill="#3a3a3a" letter-spacing="0.556" >$250,000.00</text>
<text x="1080.90" y="670.50" font-size="10" fill="#1c1c1c" letter-spacing="0.668" >201909</text>
<text x="1111.95" y="680.50" font-size="10" fill="#1c1c1c" letter-spacing="0.653" >201911</text>
<text x="1142.19" y="670.50" font-size="10" fill="#1c1c1c" letter-spacing="0.668" >202001</text>
<text x="1172.84" y="680.50" font-size="10" fill="#1c1c1c" letter-spacing="0.668" >202003</text>
<text x="1203.48" y="670.50" font-size="10" fill="#1c1c1c" letter-spacing="0.668" >202005</text>
<text x="1234.12" y="680.50" font-size="10" fill="#1c1c1c" letter-spacing="0.668" >202007</text>
<text x="1264.77" y="670.50" font-size="10" fill="#1c1c1c" letter-spacing="0.668" >202009</text>
<text x="1295.82" y="680.50" font-size="10" fill="#1c1c1c" letter-spacing="0.653" >202011</text>
<text x="1326.06" y="670.50" font-size="10" fill="#1c1c1c" letter-spacing="0.668" >202101</text>
<text x="1356.70" y="680.50" font-size="10" fill="#1c1c1c" letter-spacing="0.668" >202103</text>
<text x="1387.34" y="670.50" font-size="10" fill="#1c1c1c" letter-spacing="0.668" >202105</text>
<text x="1417.99" y="680.50" font-size="10" fill="#1c1c1c" letter-spacing="0.668" >202107</text>
<text x="1448.63" y="670.50" font-size="10" fill="#1c1c1c" letter-spacing="0.668" >202109</text>
<text x="1480.09" y="680.50" font-size="10" fill="#1c1c1c" letter-spacing="0.638" >202111</text>
<text x="1509.92" y="670.50" font-size="10" fill="#1c1c1c" letter-spacing="0.668" >202201</text>
<text x="1540.56" y="680.50" font-size="10" fill="#1c1c1c" letter-spacing="0.668" >202203</text>
<text x="1571.21" y="670.50" font-size="10" fill="#1c1c1c" letter-spacing="0.668" >202205</text>
<text x="1601.85" y="680.50" font-size="10" fill="#1c1c1c" letter-spacing="0.668" >202207</text>
<text x="1632.50" y="670.50" font-size="10" fill="#1c1c1c" letter-spacing="0.668" >202209</text>
<text x="1663.54" y="680.50" font-size="10" fill="#1c1c1c" letter-spacing="0.653" >202211</text>
<text x="1362.80" y="694.70" font-size="10" fill="#222" font-weight="700" letter-spacing="0.018" >Posting Period</text>
<g transform="translate(1007,544) rotate(-90)"><text x="-54.50" y="0.00" font-size="10" fill="#666" font-weight="700" letter-spacing="0.188" >Net Sales (Calculated)</text></g>
<g transform="translate(1797.500,544.400) rotate(-90)"><text x="-44.75" y="0.00" font-size="10" fill="#666" font-weight="700" letter-spacing="0.035" >Gross Profit (Sum)</text></g>
</svg>
<!-- table -->
<span class="t" style="left:147.50px;top:750px;font-size:15px;color:#2a2a2a;letter-spacing:0.21px;">Profit Analysis by Product Division</span><svg class="ic" style="left:922px;top:741.8px" width="16" height="16" viewBox="0 0 16 16"><path d="M9.700,11.300V13.700H6.300V9.300L2.400,4.900V3.100Q2.400,2.500,3,2.500H13.400Q14,2.500,14,3.100V4.800L12.200,6.600" fill="none" stroke="#111" stroke-width="1.150" stroke-linejoin="round"/><circle cx="9.800" cy="8.600" r="1.700" fill="#111"/></svg><div class="b" style="left:140.3px;top:778px;width:802.3px;height:30.5px;background:#f4f4f4;"></div><div class="b" style="left:339.5px;top:778px;width:1.5px;height:30.5px;background:#fcfcfc;"></div><div class="b" style="left:540.3px;top:778px;width:1.5px;height:30.5px;background:#fcfcfc;"></div><div class="b" style="left:741.2px;top:778px;width:1.5px;height:30.5px;background:#fcfcfc;"></div><span class="t" style="left:148.40px;top:787px;font-size:12.5px;color:#595959;letter-spacing:0.309px;">Full Division</span><span class="t" style="left:349.70px;top:787px;font-size:12.5px;color:#595959;letter-spacing:0.137px;">Net Sales</span><svg class="ic" style="left:411px;top:792px" width="8" height="8" viewBox="0 0 8 8"><path d="M1,1.700H6.600L3.800,6.300Z" fill="#1c7c5a"/></svg><span class="t" style="left:549.80px;top:787px;font-size:12.5px;color:#595959;letter-spacing:0.282px;">Gross Profit</span><span class="t" style="left:750.90px;top:787px;font-size:12.5px;color:#595959;letter-spacing:-0.174px;">GP %</span><span class="t" style="left:148.40px;top:818px;font-size:12.5px;color:#2e2e2e;letter-spacing:0.517px;">400 - Office Equipment</span><span class="t" style="left:444.29px;top:818px;font-size:12.5px;color:#2e2e2e;letter-spacing:0.746px;">$2,709,649.73</span><span class="t" style="left:645.29px;top:818px;font-size:12.5px;color:#2e2e2e;letter-spacing:0.746px;">$2,085,045.33</span><span class="t" style="left:888.41px;top:818px;font-size:12.5px;color:#2e2e2e;letter-spacing:0.876px;">76.95</span><span class="t" style="left:148.40px;top:850px;font-size:12.5px;color:#2e2e2e;letter-spacing:0.498px;">200 - Furniture</span><span class="t" style="left:444.29px;top:850px;font-size:12.5px;color:#2e2e2e;letter-spacing:0.746px;">$2,213,824.33</span><span class="t" style="left:656.89px;top:850px;font-size:12.5px;color:#2e2e2e;letter-spacing:0.779px;">$556,368.04</span><span class="t" style="left:888.41px;top:850px;font-size:12.5px;color:#2e2e2e;letter-spacing:0.876px;">25.13</span><span class="t" style="left:148.40px;top:882px;font-size:12.5px;color:#2e2e2e;letter-spacing:0.492px;">100 - Office Supplies</span><span class="t" style="left:455.89px;top:882px;font-size:12.5px;color:#2e2e2e;letter-spacing:0.779px;">$806,419.89</span><span class="t" style="left:656.89px;top:882px;font-size:12.5px;color:#2e2e2e;letter-spacing:0.779px;">$182,927.02</span><span class="t" style="left:888.41px;top:882px;font-size:12.5px;color:#2e2e2e;letter-spacing:0.876px;">22.68</span><span class="t" style="left:148.40px;top:914px;font-size:12.5px;color:#2e2e2e;letter-spacing:0.506px;">300 - Office Technology</span><span class="t" style="left:455.89px;top:914px;font-size:12.5px;color:#2e2e2e;letter-spacing:0.779px;">$695,579.90</span><span class="t" style="left:656.89px;top:914px;font-size:12.5px;color:#2e2e2e;letter-spacing:0.779px;">$161,565.29</span><span class="t" style="left:888.41px;top:914px;font-size:12.5px;color:#2e2e2e;letter-spacing:0.876px;">23.23</span><span class="t" style="left:148.40px;top:946px;font-size:12.5px;color:#2e2e2e;letter-spacing:0.522px;">900 - Service</span><span class="t" style="left:456.93px;top:946px;font-size:12.5px;color:#2e2e2e;letter-spacing:0.768px;">$112,018.60</span><span class="t" style="left:664.63px;top:946px;font-size:12.5px;color:#2e2e2e;letter-spacing:0.779px;">$87,024.23</span><span class="t" style="left:888.41px;top:946px;font-size:12.5px;color:#2e2e2e;letter-spacing:0.876px;">77.69</span><span class="t" style="left:148.40px;top:978px;font-size:12.5px;color:#2e2e2e;letter-spacing:0.509px;">500 - Clothing</span><span class="t" style="left:471.36px;top:978px;font-size:12.5px;color:#2e2e2e;letter-spacing:0.779px;">$7,220.95</span><span class="t" style="left:672.36px;top:978px;font-size:12.5px;color:#2e2e2e;letter-spacing:0.779px;">$1,022.93</span><span class="t" style="left:888.41px;top:978px;font-size:12.5px;color:#2e2e2e;letter-spacing:0.876px;">14.17</span><span class="t" style="left:148.40px;top:1010px;font-size:12.5px;color:#2e2e2e;letter-spacing:0.526px;">950 - Rental</span><span class="t" style="left:471.36px;top:1010px;font-size:12.5px;color:#2e2e2e;letter-spacing:0.779px;">$2,812.28</span><span class="t" style="left:672.36px;top:1010px;font-size:12.5px;color:#2e2e2e;letter-spacing:0.779px;">$2,812.28</span><span class="t" style="left:880.69px;top:1010px;font-size:12.5px;color:#2e2e2e;letter-spacing:0.856px;">100.00</span><span class="t" style="left:148.40px;top:1042px;font-size:12.5px;color:#2e2e2e;letter-spacing:0.547px;">9999 - Non Stock</span><span class="t" style="left:482.95px;top:1042px;font-size:12.5px;color:#2e2e2e;letter-spacing:0.844px;">$225.00</span><span class="t" style="left:683.95px;top:1042px;font-size:12.5px;color:#2e2e2e;letter-spacing:0.844px;">$195.10</span><span class="t" style="left:888.41px;top:1042px;font-size:12.5px;color:#2e2e2e;letter-spacing:0.876px;">86.71</span><div class="b" style="left:924.5px;top:809px;width:20.5px;height:300px;background:#f1f1f1;"></div><div class="b" style="left:926.2px;top:830px;width:16.6px;height:300px;background:#c1c1c1;"></div><svg class="ic" style="left:926px;top:814px" width="17" height="12" viewBox="0 0 17 12"><path d="M4,9.300L8.600,4L13.200,9.300z" fill="#505050"/></svg>
<!-- pie chart -->
<span class="t" style="left:992.30px;top:751px;font-size:15px;color:#555;letter-spacing:0.257px;">Top 5 Product Class Sales</span><svg class="ic" style="left:1785px;top:742.8px" width="16" height="16" viewBox="0 0 16 16"><path d="M9.700,11.300V13.700H6.300V9.300L2.400,4.900V3.100Q2.400,2.500,3,2.500H13.400Q14,2.500,14,3.100V4.800L12.200,6.600" fill="none" stroke="#111" stroke-width="1.150" stroke-linejoin="round"/><circle cx="9.800" cy="8.600" r="1.700" fill="#111"/></svg><svg class="ic" style="left:975px;top:775px" width="843" height="296" viewBox="975 775 843 296">
<text x="995.70" y="788.40" font-size="10" fill="#222" font-weight="700" letter-spacing="0.139" >Full Class</text>
<circle cx="1000.7" cy="800.8" r="5.200" fill="#1f80c2"/>
<text x="1009.60" y="805.30" font-size="10" fill="#333" letter-spacing="0.404" >20 - Printers &amp; Faxes</text>
<circle cx="1162.2" cy="800.8" r="5.200" fill="#fdd61c"/>
<text x="1171.10" y="805.30" font-size="10" fill="#333" letter-spacing="0.448" >40 - Copiers</text>
<circle cx="1323" cy="800.8" r="5.200" fill="#3fbe74"/>
<text x="1331.90" y="805.30" font-size="10" fill="#333" letter-spacing="0.503" >30 - Shredders</text>
<circle cx="1485" cy="800.8" r="5.200" fill="#bcc2c3"/>
<text x="1493.90" y="805.30" font-size="10" fill="#333" letter-spacing="0.411" >40 - Desks</text>
<circle cx="1000.7" cy="820" r="5.200" fill="#bcc2c3"/>
<text x="1009.60" y="824.50" font-size="10" fill="#333" letter-spacing="0.547" >30 - Computer Workstations</text>
<path d="M1396.5,994.6L1396.50,843.00A151.6,151.6,0,0,1,1548.07,997.46Z" fill="#2086c8" stroke="#fff" stroke-width="1" stroke-linejoin="round"/>
<path d="M1396.5,994.6L1548.07,997.46A151.6,151.6,0,0,1,1406.02,1145.90Z" fill="#fdd81e" stroke="#fff" stroke-width="1" stroke-linejoin="round"/>
<path d="M1396.5,994.6L1406.02,1145.90A151.6,151.6,0,0,1,1258.93,1058.28Z" fill="#4bc27d" stroke="#fff" stroke-width="1" stroke-linejoin="round"/>
<path d="M1396.5,994.6L1258.93,1058.28A151.6,151.6,0,0,1,1270.05,910.97Z" fill="#c1c7c6" stroke="#fff" stroke-width="1" stroke-linejoin="round"/>
<path d="M1396.5,994.6L1270.05,910.97A151.6,151.6,0,0,1,1396.50,843.00Z" fill="#c1c7c6" stroke="#fff" stroke-width="1" stroke-linejoin="round"/>
<text x="1454.30" y="927.10" font-size="10" fill="#e3f1fa" letter-spacing="0.56" >25.3%</text>
<text x="1332.75" y="908.70" font-size="10" fill="#666" letter-spacing="0.735" >15.7%</text>
<text x="1279.70" y="990.60" font-size="10" fill="#666" letter-spacing="0.66" >16.2%</text>
<text x="1455.50" y="1068.90" font-size="10" fill="#333" letter-spacing="0.41" >23.7%</text>
</svg>
<div class="b" style="left:48px;top:1071px;width:1872px;height:9px;background:#fff;"></div>
</body></html>
